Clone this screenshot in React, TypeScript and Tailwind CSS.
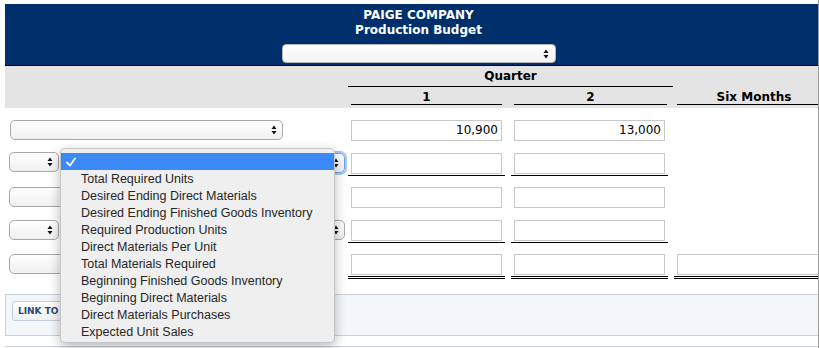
import React from 'react';

const Arrows = () => (
  <svg width="6" height="10" viewBox="0 0 6 10" className="shrink-0">
    <path d="M0.5 4L3 0.5L5.5 4Z M0.5 6L3 9.5L5.5 6Z" fill="#111" />
  </svg>
);

const Select: React.FC<{ className?: string; focus?: boolean }> = ({ className = '', focus }) => (
  <div
    className={`h-[20px] shrink-0 rounded-[5px] border bg-linear-to-b from-white to-[#f0f0f0] flex items-center justify-end pr-[5px] ${
      focus ? 'border-[#6c9fec] ring-[2px] ring-[#a9c8f6]' : 'border-[#a8a8a8]'
    } ${className}`}
  >
    <Arrows />
  </div>
);

const Cell: React.FC<{ value?: string; line?: 'single' | 'double' }> = ({ value, line }) => {
  const under =
    line === 'single'
      ? 'border-b border-black'
      : line === 'double'
      ? 'border-b-[3px] border-double border-black'
      : 'border-b border-transparent';
  return (
    <div className={`w-[157px] shrink-0 px-[3px] pb-[1px] ${under}`}>
      <div className="h-[21px] border border-[#c8c8c8] bg-white text-right pr-[3px] text-[12px] leading-[19px] font-['DejaVu_Sans',sans-serif] text-black">
        {value}
      </div>
    </div>
  );
};

const options = [
  'Total Required Units',
  'Desired Ending Direct Materials',
  'Desired Ending Finished Goods Inventory',
  'Required Production Units',
  'Direct Materials Per Unit',
  'Total Materials Required',
  'Beginning Finished Goods Inventory',
  'Beginning Direct Materials',
  'Direct Materials Purchases',
  'Expected Unit Sales',
];

export default function App() {
  return (
    <div className="relative w-[819px] h-[348px] overflow-hidden bg-white border-r border-[#9b9b9b]">
      <div className="w-[827px] ml-[5px] pt-[4px]">
        {/* title band */}
        <div className="h-[62px] bg-[#00306b] border-b border-black pt-[4px] flex flex-col items-center font-['DejaVu_Sans',sans-serif] font-bold text-[12px] leading-[15px] text-white">
          <div>PAIGE COMPANY</div>
          <div>Production Budget</div>
          <div className="mt-[6px] w-[274px] h-[19px] rounded-[4px] border border-[#b5b5b5] bg-linear-to-b from-white to-[#f3f3f3] flex items-center justify-end pr-[6px]">
            <Arrows />
          </div>
        </div>

        {/* column headings */}
        <div className="h-[42px] bg-[#e4e4e4] flex pt-[3px] font-['DejaVu_Sans',sans-serif] font-bold text-[12px] text-black">
          <div className="w-[343px] shrink-0" />
          <div className="w-[325px] shrink-0 flex flex-col">
            <div className="leading-[15px] pb-[2px] border-b border-black text-center">Quarter</div>
            <div className="flex pt-[3px]">
              <div className="ml-[3px] w-[151px] leading-[14px] border-b border-black text-center">1</div>
              <div className="ml-[12px] w-[153px] leading-[14px] border-b border-black text-center">2</div>
            </div>
          </div>
          <div className="ml-[4px] w-[154px] shrink-0 self-end mb-[3px] leading-[14px] border-b border-black text-center">
            Six Months
          </div>
        </div>

        {/* rows */}
        <div className="flex mt-[12px]">
          <div className="w-[343px] shrink-0 flex">
            <Select className="ml-[5px] w-[273px]" />
          </div>
          <div className="flex gap-[6px]">
            <Cell value="10,900" />
            <Cell value="13,000" />
          </div>
        </div>

        <div className="flex mt-[10px]">
          <div className="w-[343px] shrink-0 flex">
            <Select className="ml-[4px] w-[50px] -mt-[1px]" />
            <Select className="ml-[3px] w-[283px]" focus />
          </div>
          <div className="flex gap-[6px]">
            <Cell line="single" />
            <Cell line="single" />
          </div>
        </div>

        <div className="flex mt-[11px]">
          <div className="w-[343px] shrink-0 flex">
            <Select className="ml-[4px] w-[274px]" />
          </div>
          <div className="flex gap-[6px]">
            <Cell />
            <Cell />
          </div>
        </div>

        <div className="flex mt-[10px]">
          <div className="w-[343px] shrink-0 flex">
            <Select className="ml-[4px] w-[50px]" />
            <Select className="ml-[3px] w-[283px]" />
          </div>
          <div className="flex gap-[6px]">
            <Cell line="single" />
            <Cell line="single" />
          </div>
        </div>

        <div className="flex mt-[11px]">
          <div className="w-[343px] shrink-0 flex">
            <Select className="ml-[4px] w-[274px]" />
          </div>
          <div className="flex gap-[6px]">
            <Cell line="double" />
            <Cell line="double" />
            <Cell line="double" />
          </div>
        </div>

        {/* link box */}
        <div className="mt-[15px] h-[42px] bg-[#f4f7fa] border border-[#c9d2dc] pt-[6px] pl-[6px] flex items-start">
          <div className="h-[20px] flex items-center px-[5px] rounded-[3px] border border-[#c3cedb] bg-linear-to-b from-white to-[#edf1f5] text-[9px] leading-[12px] font-bold text-[#2b4770] font-['DejaVu_Sans',sans-serif]">
            LINK TO TEXT
          </div>
        </div>
        <div className="mt-[10px] h-[10px] border-t border-[#c9d2dc]" />
      </div>

      {/* open dropdown menu */}
      <div className="absolute left-[60px] top-[148px] w-[275px] h-[195px] rounded-[5px] bg-[#efefef] border border-[#c6c6c6] shadow-[0_4px_12px_rgba(0,0,0,0.28)] pt-[4px] font-['Liberation_Sans',sans-serif] text-[12.5px] text-[#262626]">
        <div className="h-[17px] bg-[#3b89f4] flex items-center pl-[5px]">
          <svg width="10" height="10" viewBox="0 0 10 10">
            <path d="M1 5.5L4 8.5L9 1.5" fill="none" stroke="#fff" strokeWidth="1.8" strokeLinecap="round" strokeLinejoin="round" />
          </svg>
        </div>
        {options.map((o) => (
          <div key={o} className="h-[17px] leading-[17px] pt-[1px] pl-[20px] whitespace-nowrap">
            {o}
          </div>
        ))}
      </div>
    </div>
  );
}
